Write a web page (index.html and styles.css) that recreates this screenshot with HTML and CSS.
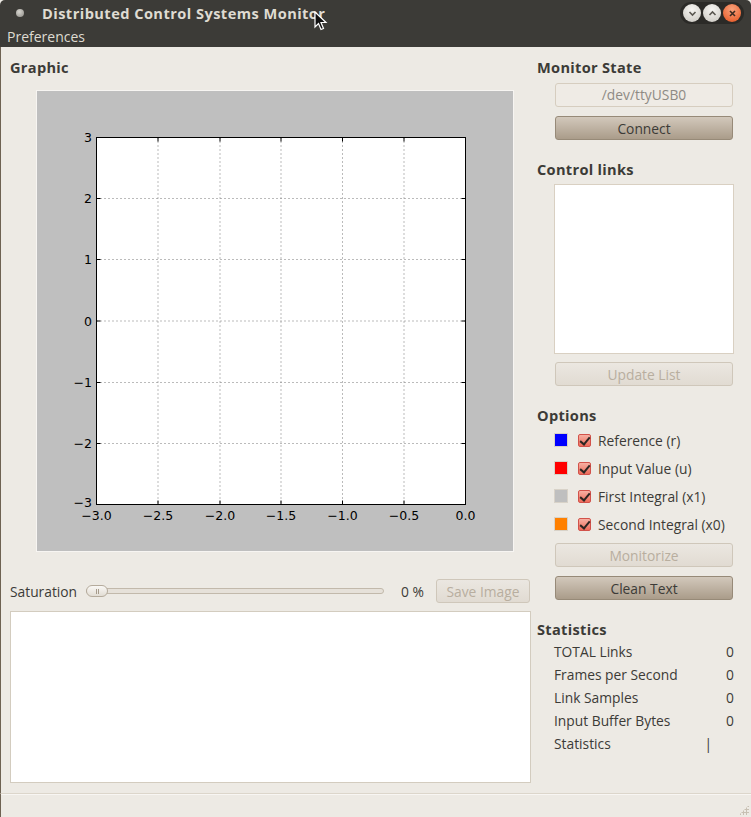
FILE: index.html
```html
<!DOCTYPE html>
<html>
<head>
<meta charset="utf-8">
<link rel="stylesheet" href="styles.css">
</head>
<body>
<div class="window">
  <div class="titlebar">
    <span class="app-dot"></span>
    <span class="title">Distributed Control Systems Monitor</span>
    <div class="winbtns">
      <span class="wbtn"><svg width="13" height="13" viewBox="0 0 13 13"><path d="M3.5 5 L6.5 8 L9.5 5" fill="none" stroke="#5a5750" stroke-width="1.6"/></svg></span>
      <span class="wbtn"><svg width="13" height="13" viewBox="0 0 13 13"><path d="M3.5 8 L6.5 5 L9.5 8" fill="none" stroke="#5a5750" stroke-width="1.6"/></svg></span>
      <span class="wbtn close"><svg width="13" height="13" viewBox="0 0 13 13"><path d="M4 4 L9 9 M9 4 L4 9" fill="none" stroke="#3c2a20" stroke-width="1.6"/></svg></span>
    </div>
    <svg class="cursor" width="14" height="20" viewBox="0 0 14 20"><path d="M1 1 L1 16 L4.5 12.5 L7 18.5 L9.5 17.5 L7 11.5 L12 11.5 Z" fill="#111" stroke="#fff" stroke-width="1.2"/></svg>
  </div>
  <div class="menubar"><span class="menu-item">Preferences</span></div>

  <div class="content">
    <div class="left">
      <div class="heading">Graphic</div>
      <div class="figure">
        <svg width="476" height="460" viewBox="0 0 476 460">
          <rect x="0" y="0" width="476" height="460" fill="#bfbfbf"/>
          <rect x="59.5" y="46.5" width="369" height="367" fill="#fff"/>
          <g stroke="#777" stroke-width="1" stroke-dasharray="1,3" fill="none">
            <line x1="121" y1="46.5" x2="121" y2="413.5"/>
            <line x1="183" y1="46.5" x2="183" y2="413.5"/>
            <line x1="244" y1="46.5" x2="244" y2="413.5"/>
            <line x1="305.5" y1="46.5" x2="305.5" y2="413.5"/>
            <line x1="367" y1="46.5" x2="367" y2="413.5"/>
            <line x1="59.5" y1="107.5" x2="428.5" y2="107.5"/>
            <line x1="59.5" y1="168.5" x2="428.5" y2="168.5"/>
            <line x1="59.5" y1="230" x2="428.5" y2="230"/>
            <line x1="59.5" y1="291.5" x2="428.5" y2="291.5"/>
            <line x1="59.5" y1="352.5" x2="428.5" y2="352.5"/>
          </g>
          <g stroke="#000" stroke-width="1" fill="none">
            <path d="M121 46.5v4M183 46.5v4M244 46.5v4M305.5 46.5v4M367 46.5v4"/>
            <path d="M121 413.5v-4M183 413.5v-4M244 413.5v-4M305.5 413.5v-4M367 413.5v-4"/>
            <path d="M59.5 107.5h4M59.5 168.5h4M59.5 230h4M59.5 291.5h4M59.5 352.5h4"/>
            <path d="M428.5 107.5h-4M428.5 168.5h-4M428.5 230h-4M428.5 291.5h-4M428.5 352.5h-4"/>
            <rect x="59.5" y="46.5" width="369" height="367"/>
          </g>
          <g class="ticklbl" text-anchor="end">
            <text x="55" y="51">3</text>
            <text x="55" y="112">2</text>
            <text x="55" y="173">1</text>
            <text x="55" y="234.5">0</text>
            <text x="55" y="296">−1</text>
            <text x="55" y="357">−2</text>
            <text x="55" y="416">−3</text>
          </g>
          <g class="ticklbl" text-anchor="middle">
            <text x="59.5" y="429">−3.0</text>
            <text x="121" y="429">−2.5</text>
            <text x="183" y="429">−2.0</text>
            <text x="244" y="429">−1.5</text>
            <text x="305.5" y="429">−1.0</text>
            <text x="367" y="429">−0.5</text>
            <text x="428.5" y="429">0.0</text>
          </g>
        </svg>
      </div>
      <div class="satrow">
        <span class="satlabel">Saturation</span>
        <div class="slider"><span class="thumb"><span class="grip"></span></span></div>
        <span class="satval">0 %</span>
        <button class="btn disabled save">Save Image</button>
      </div>
      <div class="textarea"></div>
    </div>

    <div class="right">
      <div class="heading">Monitor State</div>
      <div class="entry">/dev/ttyUSB0</div>
      <button class="btn gap9">Connect</button>

      <div class="heading sec">Control links</div>
      <div class="listbox"></div>
      <button class="btn disabled gap8">Update List</button>

      <div class="heading sec">Options</div>
      <div class="options">
        <div class="opt"><span class="swatch" style="background:#0000ff"></span><span class="check"></span><span>Reference (r)</span></div>
        <div class="opt"><span class="swatch" style="background:#ff0000"></span><span class="check"></span><span>Input Value (u)</span></div>
        <div class="opt"><span class="swatch" style="background:#bfbfbf"></span><span class="check"></span><span>First Integral (x1)</span></div>
        <div class="opt"><span class="swatch" style="background:#ff8000"></span><span class="check"></span><span>Second Integral (x0)</span></div>
      </div>
      <button class="btn disabled gap5">Monitorize</button>
      <button class="btn gap9">Clean Text</button>

      <div class="heading sec">Statistics</div>
      <div class="stats">
        <div class="stat"><span>TOTAL Links</span><span class="val">0</span></div>
        <div class="stat"><span>Frames per Second</span><span class="val">0</span></div>
        <div class="stat"><span>Link Samples</span><span class="val">0</span></div>
        <div class="stat"><span>Input Buffer Bytes</span><span class="val">0</span></div>
        <div class="stat"><span>Statistics</span><span class="val bar">|</span></div>
      </div>
    </div>
  </div>
  <div class="statusbar"><span class="grip-corner"></span></div>
</div>
</body>
</html>
```

FILE: styles.css
```css
* { box-sizing: border-box; }
html, body { margin: 0; padding: 0; }
body {
  width: 751px;
  height: 817px;
  overflow: hidden;
  background: #edeae4;
  font-family: "Open Sans", "DejaVu Sans", sans-serif;
  font-size: 13.8px;
  color: #3c3b37;
}
.window { width: 751px; height: 817px; display: flex; flex-direction: column; position: relative; }

.titlebar {
  height: 26px;
  background: #3c3b37;
  display: flex;
  align-items: center;
  position: relative;
  border-radius: 5px 5px 0 0;
}
.app-dot {
  width: 8px; height: 8px; border-radius: 50%;
  background: radial-gradient(circle at 40% 35%, #d8d6d0, #8c8a84);
  margin-left: 16px;
  margin-right: 18px;
}
.title {
  font-weight: bold;
  color: #dfdbd2;
  font-size: 14.6px;
  letter-spacing: 0.45px;
}
.winbtns {
  margin-left: auto;
  margin-right: 7px;
  display: flex;
  gap: 2px;
  padding: 2px 3px;
  border-radius: 11px;
  background: #2b2a27;
}
.wbtn {
  width: 18px; height: 18px; border-radius: 50%;
  background: radial-gradient(circle at 50% 30%, #f6f5f2, #c9c6bf);
  display: flex; align-items: center; justify-content: center;
}
.wbtn.close { background: radial-gradient(circle at 50% 30%, #f8a27c, #e5521e); }
.cursor { position: absolute; left: 314px; top: 11px; }

.menubar {
  height: 21px;
  background: #3c3b37;
  color: #dfdbd2;
  display: flex;
  align-items: center;
  padding-left: 7px;
}
.menu-item { font-size: 14px; }

.content {
  flex: 1;
  display: flex;
  border-left: 1px solid #6e6252;
}
.heading { font-weight: bold; height: 16px; line-height: 16px; font-size: 14.6px; letter-spacing: 0.3px; }

.left { width: 536px; padding: 12px 0 0 9px; }
.figure {
  margin: 16px 0 0 27px;
  width: 476px; height: 460px;
  outline: 1px solid #f7f5f2;
}
.figure svg { display: block; }
.ticklbl text { font-family: "DejaVu Sans", sans-serif; font-size: 12.5px; fill: #000; }

.satrow {
  margin-top: 28px;
  height: 24px;
  display: flex;
  align-items: center;
}
.satlabel { width: 76px; }
.slider {
  width: 298px;
  height: 6px;
  border: 1px solid #c2b9ab;
  border-radius: 3px;
  background: #e6e1d9;
  position: relative;
}
.thumb {
  position: absolute;
  left: -1px; top: -4px;
  width: 22px; height: 12px;
  border: 1px solid #b5ab9c;
  border-radius: 6px;
  background: linear-gradient(#faf8f5, #e2ddd4);
  display: flex; justify-content: center; align-items: center;
}
.grip { width: 3px; height: 5px; border-left: 1px solid #a69b8b; border-right: 1px solid #a69b8b; }
.satval { margin-left: 17px; width: 35px; }

.btn {
  display: block;
  width: 178px;
  height: 24px;
  font-family: inherit;
  font-size: 13.8px;
  color: #3c3b37;
  border: 1px solid #978a78;
  border-radius: 3px;
  background: linear-gradient(#d2c8bb, #aa9c8a);
  padding: 0;
  margin-left: 18px;
}
.btn.disabled {
  background: linear-gradient(#ebe7e1, #e1dbd2);
  border-color: #cfc7ba;
  color: #b8ae9f;
}
.btn.save { width: 94px; margin-left: 0; }
.gap9 { margin-top: 9px; }
.gap8 { margin-top: 8px; }
.gap5 { margin-top: 5px; }

.textarea {
  margin-top: 8px;
  width: 521px;
  height: 172px;
  background: #fff;
  border: 1px solid #d3ccbf;
}

.right { flex: 1; padding: 12px 0 0 0; }
.heading.sec { margin-top: 21px; }
.entry {
  margin: 8px 0 0 18px;
  width: 178px; height: 24px;
  border: 1px solid #d6cdbf;
  border-radius: 3px;
  background: #efebe5;
  color: #8e8a84;
  text-align: center;
  line-height: 22px;
}
.listbox {
  margin: 7px 0 0 17px;
  width: 180px; height: 170px;
  background: #fff;
  border: 1px solid #d9d0c2;
}
.options { margin-top: 3px; }
.opt {
  height: 28px;
  display: flex;
  align-items: center;
  padding-left: 17px;
}
.swatch {
  width: 14px; height: 14px;
  border: 1px solid #d8d2c8;
  margin-right: 10px;
}
.check {
  width: 13px; height: 13px;
  border: 1px solid #d2524a;
  border-radius: 2px;
  background: linear-gradient(#f6b0a2, #ee6b5a);
  margin-right: 7px;
  position: relative;
}
.check::after {
  content: "";
  position: absolute;
  left: 3px; top: 0px;
  width: 4px; height: 8px;
  border-right: 2px solid #2b2622;
  border-bottom: 2px solid #2b2622;
  transform: rotate(40deg);
}
.stats { margin-top: 3px; }
.stat {
  height: 23px;
  display: flex;
  align-items: center;
  padding-left: 17px;
  padding-right: 17px;
}
.stat .val { margin-left: auto; }
.stat .val.bar { margin-right: 22px; }

.statusbar {
  height: 24px;
  border-top: 1px solid #dcd6cb;
  box-shadow: inset 0 1px 0 #f8f6f3;
  border-left: 1px solid #6e6252;
  position: relative;
}
.grip-corner {
  position: absolute; right: 2px; bottom: 2px;
  width: 10px; height: 10px;
  background: radial-gradient(circle, #c8c0b3 1px, transparent 1.2px) 0 0 / 3px 3px;
  clip-path: polygon(100% 0, 100% 100%, 0 100%);
}
```
